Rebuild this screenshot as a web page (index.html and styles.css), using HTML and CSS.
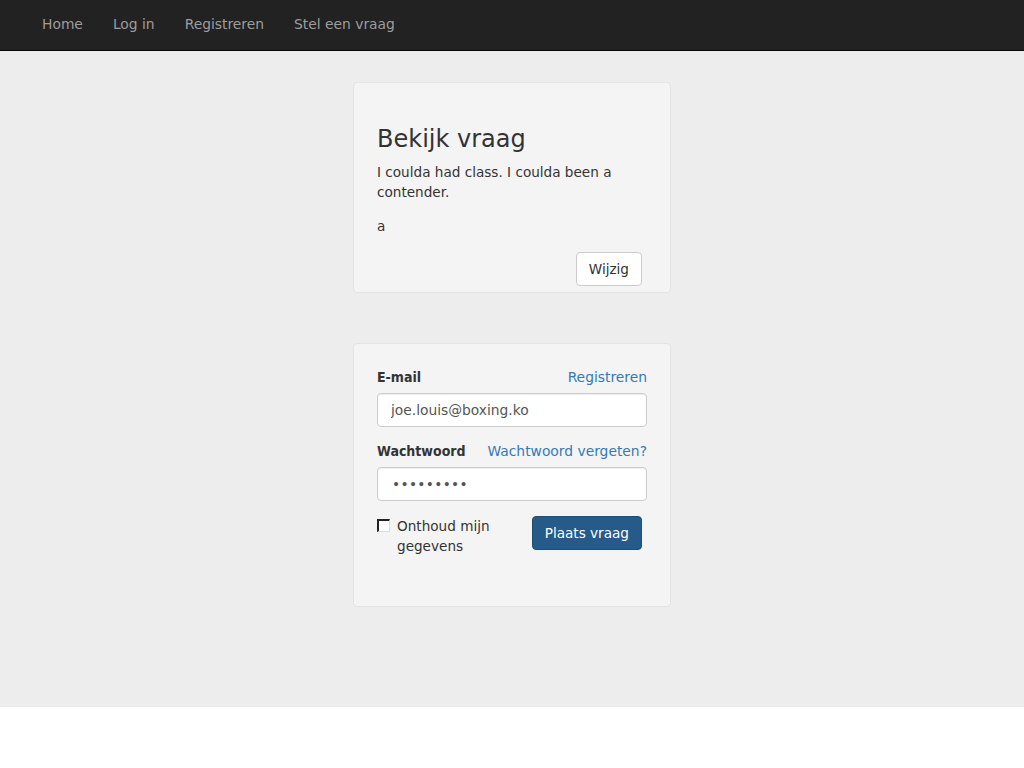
FILE: index.html
```html
<!DOCTYPE html>
<html lang="nl">
<head>
<meta charset="utf-8">
<title>Bekijk vraag</title>
<link rel="stylesheet" href="styles.css">
</head>
<body>
<nav class="navbar">
  <ul class="nav">
    <li><a href="#">Home</a></li>
    <li><a href="#">Log in</a></li>
    <li><a href="#">Registreren</a></li>
    <li><a href="#">Stel een vraag</a></li>
  </ul>
</nav>
<main class="main">
  <section class="well question">
    <h2 class="title">Bekijk vraag</h2>
    <p class="text">I coulda had class. I coulda been a contender.</p>
    <p class="text">a</p>
    <div class="actions">
      <button class="btn btn-default" type="button">Wijzig</button>
    </div>
  </section>
  <section class="well login">
    <form class="form">
      <div class="label-row">
        <label class="label" for="email">E-mail</label>
        <a class="link" href="#">Registreren</a>
      </div>
      <input class="input" id="email" type="text" value="joe.louis@boxing.ko">
      <div class="label-row">
        <label class="label" for="pw">Wachtwoord</label>
        <a class="link" href="#">Wachtwoord vergeten?</a>
      </div>
      <input class="input pw" id="pw" type="text" value="•••••••••">
      <div class="bottom-row">
        <label class="check">
          <span class="box"></span>
          <span class="check-text">Onthoud mijn<br>gegevens</span>
        </label>
        <button class="btn btn-primary" type="button">Plaats vraag</button>
      </div>
    </form>
  </section>
</main>
</body>
</html>
```
FILE: styles.css
```css
* { box-sizing: border-box; }
html, body { margin: 0; padding: 0; background: #fff; }
body {
  font-family: "DejaVu Sans", Verdana, sans-serif;
  font-size: 13.6px;
  line-height: 20px;
  color: #333;
}
.navbar {
  height: 51px;
  background: #222;
  border-bottom: 1px solid #080808;
  padding-left: 27px;
}
.nav {
  list-style: none;
  margin: 0;
  padding: 0;
  display: flex;
  font-size: 13.85px;
}
.nav a {
  display: block;
  padding: 14px 15px 16px;
  color: #9d9d9d;
  text-decoration: none;
}
.main {
  background: #ededed;
  height: 656px;
  padding-top: 31px;
  display: flex;
  flex-direction: column;
  align-items: center;
}
.well {
  width: 318px;
  background: #f4f4f4;
  border: 1px solid #e3e3e3;
  border-radius: 4px;
  padding: 0 23px;
}
.question {
  padding-top: 41px;
  padding-bottom: 6px;
}
.title {
  margin: 0 0 8px;
  font-size: 24px;
  line-height: 30px;
  font-weight: 500;
}
.text { margin: 0 0 14px; }
.actions {
  display: flex;
  justify-content: flex-end;
  padding-right: 5px;
  padding-top: 2px;
}
.btn {
  font-family: inherit;
  font-size: 13.6px;
  line-height: 20px;
  height: 34px;
  padding: 6px 12px;
  border-radius: 4px;
  border: 1px solid #ccc;
  cursor: pointer;
}
.btn-default { background: #fff; color: #333; }
.btn-primary {
  background: #265a88;
  border-color: #204d74;
  color: #fff;
}
.login {
  margin-top: 50px;
  padding-top: 23px;
  padding-bottom: 50px;
}
.label-row {
  display: flex;
  justify-content: space-between;
  align-items: baseline;
  margin-bottom: 6px;
}
.label {
  font-family: "DejaVu Sans Condensed", "DejaVu Sans", sans-serif;
  font-size: 14px;
  font-weight: bold;
}
.link {
  color: #337ab7;
  text-decoration: none;
  font-size: 13.85px;
}
.input {
  display: block;
  width: 100%;
  height: 34px;
  padding: 6px 13px;
  font-family: inherit;
  font-size: 13.8px;
  color: #555;
  background: #fff;
  border: 1px solid #ccc;
  border-radius: 4px;
  margin-bottom: 14px;
  box-shadow: inset 0 1px 1px rgba(0,0,0,.075);
}
.pw { letter-spacing: 0.3px; padding-left: 14px; }
.bottom-row {
  display: flex;
  justify-content: space-between;
  align-items: flex-start;
  padding-right: 5px;
  padding-top: 1px;
}
.check {
  display: flex;
  align-items: flex-start;
  gap: 7px;
}
.box {
  width: 13px;
  height: 13px;
  margin-top: 3px;
  background: #fff;
  border-top: 2px solid #222;
  border-left: 2px solid #222;
  border-right: 1px solid #ddd;
  border-bottom: 1px solid #ddd;
}
```
